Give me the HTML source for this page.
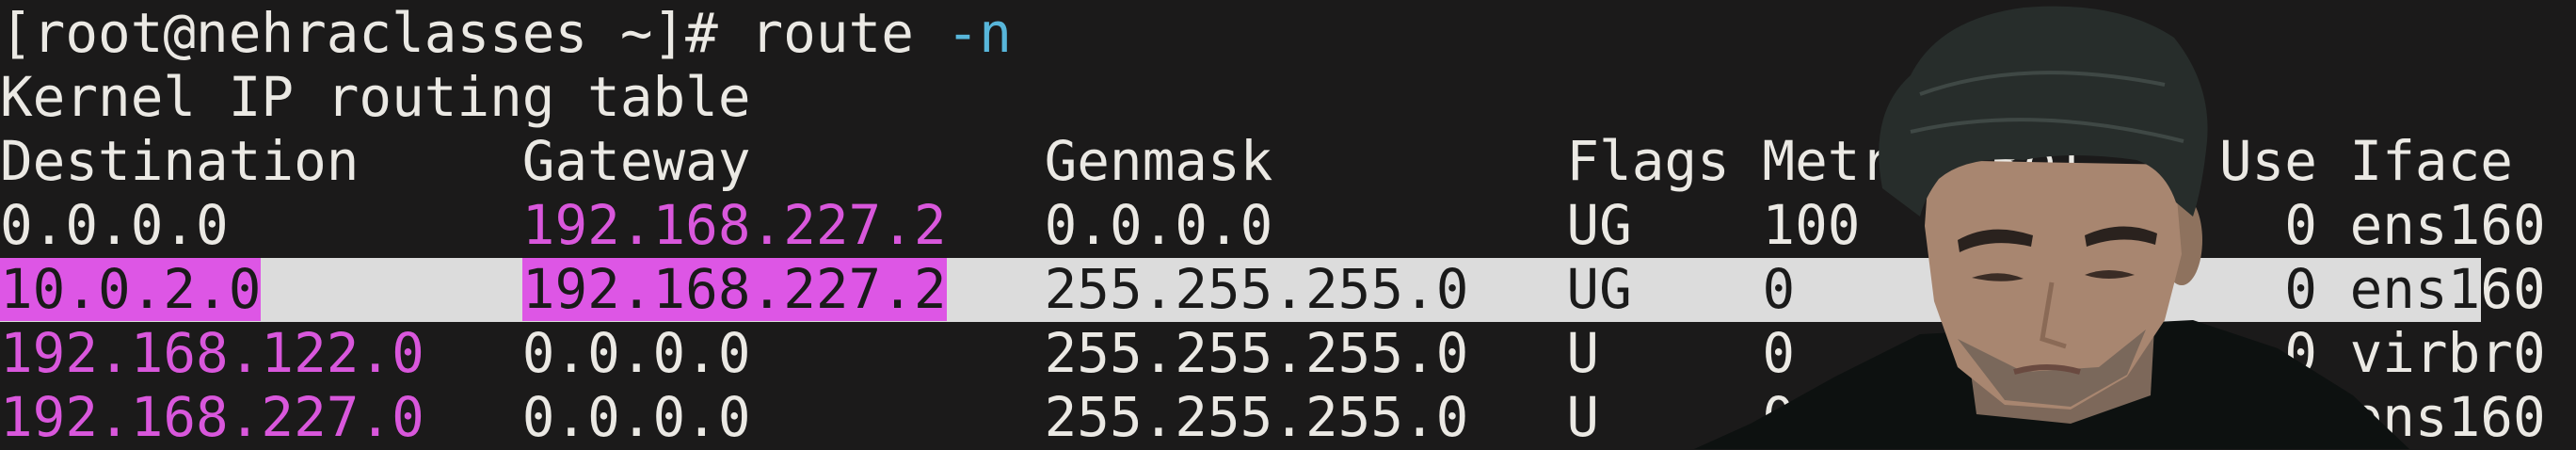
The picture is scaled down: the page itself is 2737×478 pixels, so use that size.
<!DOCTYPE html>
<html><head><meta charset="utf-8"><style>
html,body{margin:0;padding:0;}
body{width:2737px;height:477px;background:#1b1a1a;overflow:hidden;position:relative;}
#t{position:absolute;left:0;top:2px;margin:0;font-family:"DejaVu Sans Mono","Liberation Mono",monospace;font-size:57.6px;line-height:68px;color:#ebe9e4;white-space:pre;}
.m{color:#d957dc}
.c{color:#58b6da}
.hl{background:#dd56e5;color:#1a1a1a}
.bandtxt{color:#1a1a1a}
.w{color:#ebe9e4}
#band{position:absolute;left:0;top:274px;width:2636px;height:68px;background:#dcdcdc;}
svg{position:absolute;left:0;top:0;}
</style></head><body>
<div id="band"></div>
<pre id="t">[root@nehraclasses ~]# route <span class="c">-n</span>
Kernel IP routing table
Destination     Gateway         Genmask         Flags Metric Ref    Use Iface
0.0.0.0         <span class="m">192.168.227.2</span>   0.0.0.0         UG    100    0        0 ens160
<span class="bandtxt"><span class="hl">10.0.2.0</span>        <span class="hl">192.168.227.2</span>   255.255.255.0   UG    0      0        0 ens1<span class="w">60</span></span>
<span class="m">192.168.122.0</span>   0.0.0.0         255.255.255.0   U     0      0        0 virbr0
<span class="m">192.168.227.0</span>   0.0.0.0         255.255.255.0   U     0      0        0 ens160</pre>
<svg width="2737" height="477" viewBox="0 0 2737 477">
<path d="M2040 355 L1950 400 L1860 450 L1800 477 L2560 477 L2500 420 L2420 370 L2330 340 Z" fill="#0d1110"/>
<path d="M2085 330 L2290 330 L2285 420 L2200 450 L2100 440 Z" fill="#7d685a"/>
<ellipse cx="2318" cy="255" rx="22" ry="48" fill="#8e725e"/>
<path d="M2050 170 L2310 175 L2318 270 L2300 340 L2260 400 L2200 435 L2130 430 L2080 390 L2055 320 L2045 240 Z" fill="#a88670"/>
<path d="M2080 360 L2130 425 L2200 432 L2260 398 L2280 350 L2230 390 L2150 395 Z" fill="#7a685b"/>
<path d="M2080 255 Q2115 235 2160 250 L2158 262 Q2115 252 2082 268 Z" fill="#2a221e"/>
<path d="M2215 250 Q2255 232 2292 248 L2290 260 Q2255 248 2217 262 Z" fill="#2a221e"/>
<path d="M2095 295 Q2125 285 2150 296 Q2125 302 2095 295 Z" fill="#3a2c25"/>
<path d="M2215 292 Q2240 282 2268 292 Q2240 300 2215 292 Z" fill="#3a2c25"/>
<path d="M2180 300 L2170 360 L2195 368" stroke="#8a6a56" stroke-width="5" fill="none"/>
<path d="M2140 395 Q2175 385 2210 395" stroke="#6a4a40" stroke-width="6" fill="none"/>
<path d="M2000 200 Q1985 120 2030 80 Q2060 20 2150 8 Q2250 0 2310 40 Q2350 90 2345 150 Q2340 200 2330 230 L2312 215 Q2300 180 2270 170 Q2200 160 2150 170 Q2090 165 2060 190 Q2045 210 2040 230 Z" fill="#272d2b"/>
<path d="M2040 100 Q2150 60 2300 90 M2030 140 Q2160 110 2320 150" stroke="#3f4845" stroke-width="4" fill="none"/>
</svg>
</body></html>
